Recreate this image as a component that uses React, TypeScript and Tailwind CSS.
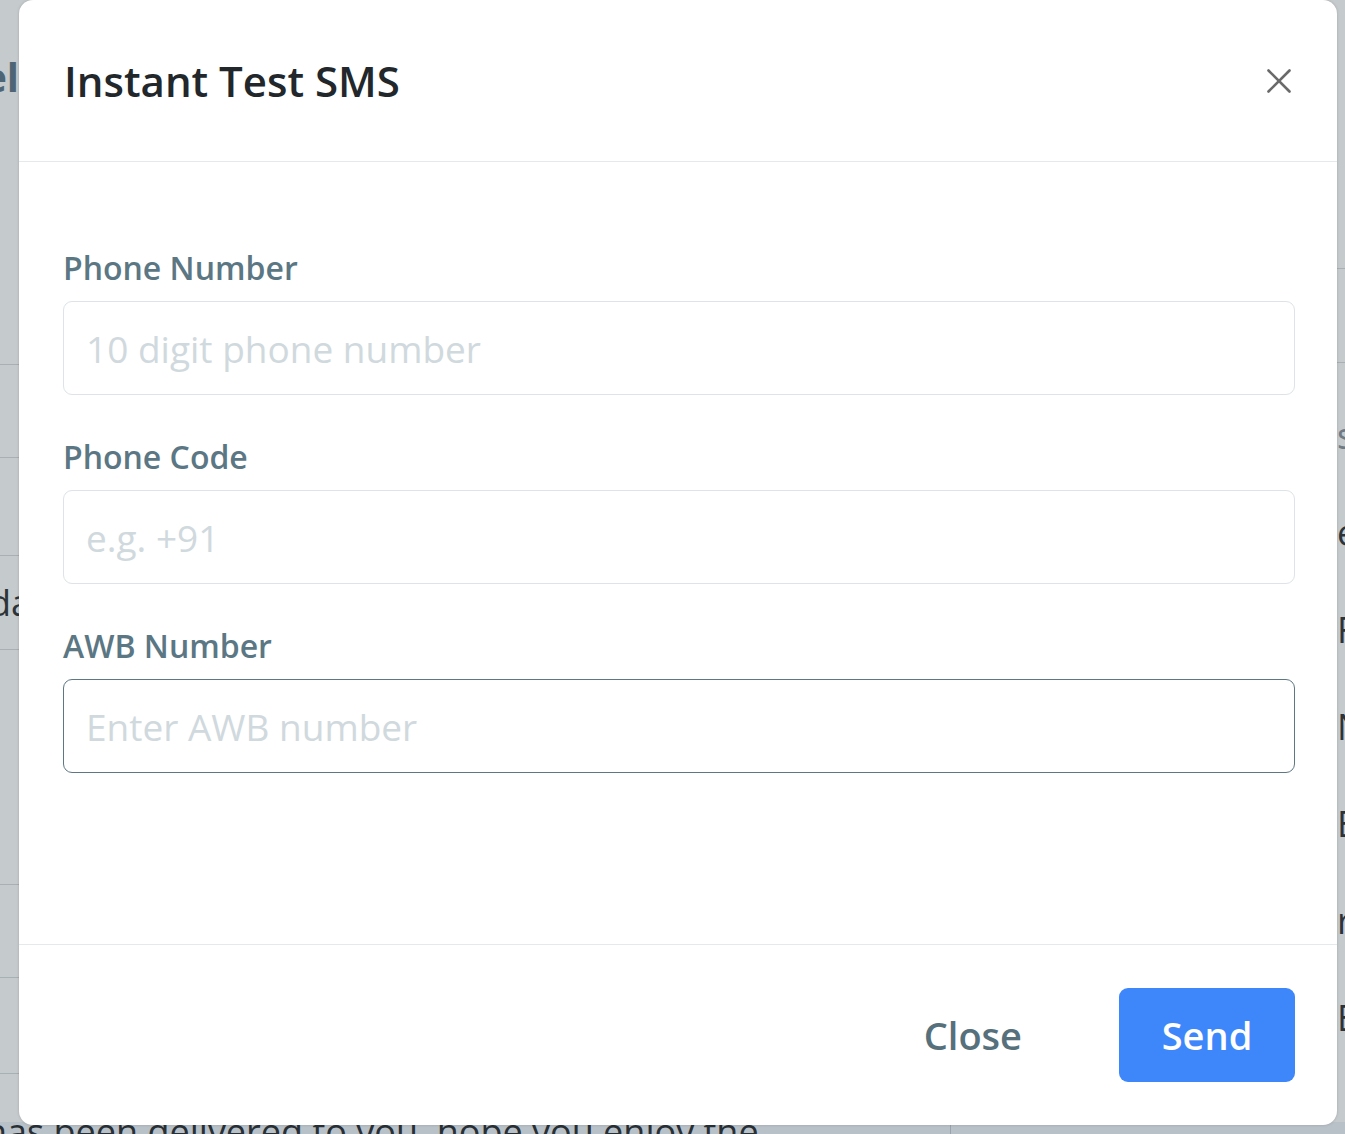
import { X } from 'lucide-react';

const leftRows = [
  { h: 'h-[365px]', text: null },
  { h: 'h-[93px]', text: null },
  { h: 'h-[98px]', text: null },
  { h: 'h-[94px]', text: 'dat' },
  { h: 'h-[235px]', text: null },
  { h: 'h-[93px]', text: null },
  { h: 'h-[96px]', text: null },
];

const rightLetters = ['s', 'el', 'F', 'N', 'E', 'r', 'E'];

const fields = [
  { label: 'Phone Number', placeholder: '10 digit phone number', active: false },
  { label: 'Phone Code', placeholder: 'e.g. +91', active: false },
  { label: 'AWB Number', placeholder: 'Enter AWB number', active: true },
];

function Backdrop() {
  return (
    <div className="flex h-full flex-col">
      <div className="flex h-[1122px]">
        {/* left edge of the page behind */}
        <div className="w-[19px] overflow-hidden">
          {leftRows.map((row, i) => (
            <div
              key={i}
              className={`${row.h} flex border-b border-[#a9b0b5] ${i === 0 ? 'items-start' : 'items-center'}`}
            >
              {i === 0 && (
                <div className="mt-[55px] flex w-[19px] justify-end whitespace-nowrap text-[40px] font-bold leading-[44px] text-[#4e6575]">
                  Panel
                </div>
              )}
              {row.text && (
                <div className="ml-[-11px] whitespace-nowrap text-[36px] leading-[44px] text-[#2d3439]">
                  {row.text}
                </div>
              )}
            </div>
          ))}
        </div>
        <div className="flex-1" />
        {/* right edge of the page behind */}
        <div className="w-[8px] overflow-hidden">
          <div className="w-[200px]">
            <div className="h-[269px] border-b border-[#a9b0b5]" />
            <div className="h-[94px] border-b border-[#a9b0b5]" />
            <div className="h-[24px]" />
            {rightLetters.map((l, i) => (
              <div
                key={i}
                className={`flex h-[97px] items-center whitespace-nowrap text-[36px] leading-[44px] ${
                  i === 0 ? 'text-[#6f7a83]' : 'text-[#2d3439]'
                }`}
              >
                {l}
              </div>
            ))}
          </div>
        </div>
      </div>
      <div className="flex h-[12px] overflow-hidden bg-[#b9c1c8]">
        <div className="ml-[-15px] mt-[-9px] w-[966px] shrink-0 whitespace-nowrap border-r border-[#9aa3ab] text-[36px] leading-[38px] text-[#283036]">
          has been delivered to you, hope you enjoy the
        </div>
      </div>
    </div>
  );
}

export default function App() {
  return (
    <div className="relative h-[1134px] w-full overflow-hidden bg-[#c5cacd] font-['Open_Sans',sans-serif]">
      <Backdrop />

      {/* Modal */}
      <div className="absolute left-[19px] top-0 flex w-[1318px] flex-col rounded-[14px] bg-white shadow-[0_0_3px_rgba(0,0,0,0.18)]">
        {/* Header */}
        <div className="flex h-[161px] items-center justify-between pl-[45px] pr-[37px]">
          <h1 className="text-[42px] font-semibold leading-none text-[#22272b]">
            Instant Test SMS
          </h1>
          <button className="flex h-[42px] w-[42px] items-center justify-center text-[#6a6a6a]">
            <X size={42} strokeWidth={1.5} />
          </button>
        </div>
        <div className="h-px bg-[#e6e9ec]" />

        {/* Body */}
        <div className="flex flex-col gap-[40px] pb-[171px] pl-[44px] pr-[42px] pt-[84px]">
          {fields.map((f) => (
            <div key={f.label} className="flex flex-col">
              <label className="mb-[11px] text-[32px] font-semibold leading-[44px] text-[#5b7784]">
                {f.label}
              </label>
              <input
                placeholder={f.placeholder}
                className={`h-[94px] w-full rounded-[9px] bg-white px-[22px] text-[37px] text-[#2d3439] outline-none placeholder:text-[#d0d9dd] ${
                  f.active ? 'border-[1.5px] border-[#5d7783]' : 'border border-[#dde3e7]'
                }`}
              />
            </div>
          ))}
        </div>

        {/* Footer */}
        <div className="h-px bg-[#e6e9ec]" />
        <div className="flex h-[180px] items-center justify-end pr-[42px]">
          <button className="mr-[53px] h-[94px] px-[44px] text-[38px] font-semibold text-[#56707c]">
            Close
          </button>
          <button className="h-[94px] w-[176px] rounded-[9px] bg-[#3d87fb] text-[38px] font-semibold text-white">
            Send
          </button>
        </div>
      </div>
    </div>
  );
}
